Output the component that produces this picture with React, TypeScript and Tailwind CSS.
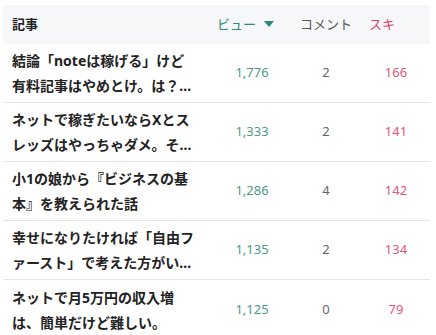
const rows = [
  { title: '結論「noteは稼げる」けど有料記事はやめとけ。は？ちゃんと書けば売れる', views: '1,776', comments: 2, likes: 166 },
  { title: 'ネットで稼ぎたいならXとスレッズはやっちゃダメ。その理由', views: '1,333', comments: 2, likes: 141 },
  { title: '小1の娘から『ビジネスの基本』を教えられた話', views: '1,286', comments: 4, likes: 142 },
  { title: '幸せになりたければ「自由ファースト」で考えた方がいい理由', views: '1,135', comments: 2, likes: 134 },
  { title: 'ネットで月5万円の収入増は、簡単だけど難しい。', views: '1,125', comments: 0, likes: 79 },
]

export default function App() {
  return (
    <div className="bg-white min-h-[335px] pt-[5px] pl-[3px] w-[430px] font-['Noto_Sans','Noto_Sans_CJK_JP',sans-serif]">
      <div className="flex items-center h-[39px] bg-[#f5f7f8] rounded-[3px] pl-[9px] text-[13px]">
        <div className="w-[189px] font-bold text-[#222]">記事</div>
        <div className="w-[102px] flex items-center justify-center pr-[13px] text-[#2b8a76]">
          <span>ビュー</span>
          <svg width="10" height="7" viewBox="0 0 10 7" className="ml-[8px]">
            <path d="M0 0h10L5 6z" fill="#2b8a76" />
          </svg>
        </div>
        <div className="w-[46px] flex justify-center whitespace-nowrap text-[#555]">コメント</div>
        <div className="w-[81px] text-center pr-[15px] text-[#dc3d67]">スキ</div>
      </div>
      {rows.map((r, i) => (
        <div
          key={i}
          className={`flex items-center h-[59px] pl-[9px] ${i < rows.length - 1 ? 'border-b border-[#e3e5e7]' : ''}`}
        >
          <div className="w-[189px] pr-[4px]">
            <div className="text-[14px] leading-[25px] font-bold text-[#222] line-clamp-2">{r.title}</div>
          </div>
          <div className="w-[102px] text-center text-[13px] text-[#4a9b87]">{r.views}</div>
          <div className="w-[46px] text-center text-[13px] text-[#666]">{r.comments}</div>
          <div className="w-[81px] text-center pl-[13px] text-[13px] text-[#e0577a]">{r.likes}</div>
        </div>
      ))}
    </div>
  )
}
